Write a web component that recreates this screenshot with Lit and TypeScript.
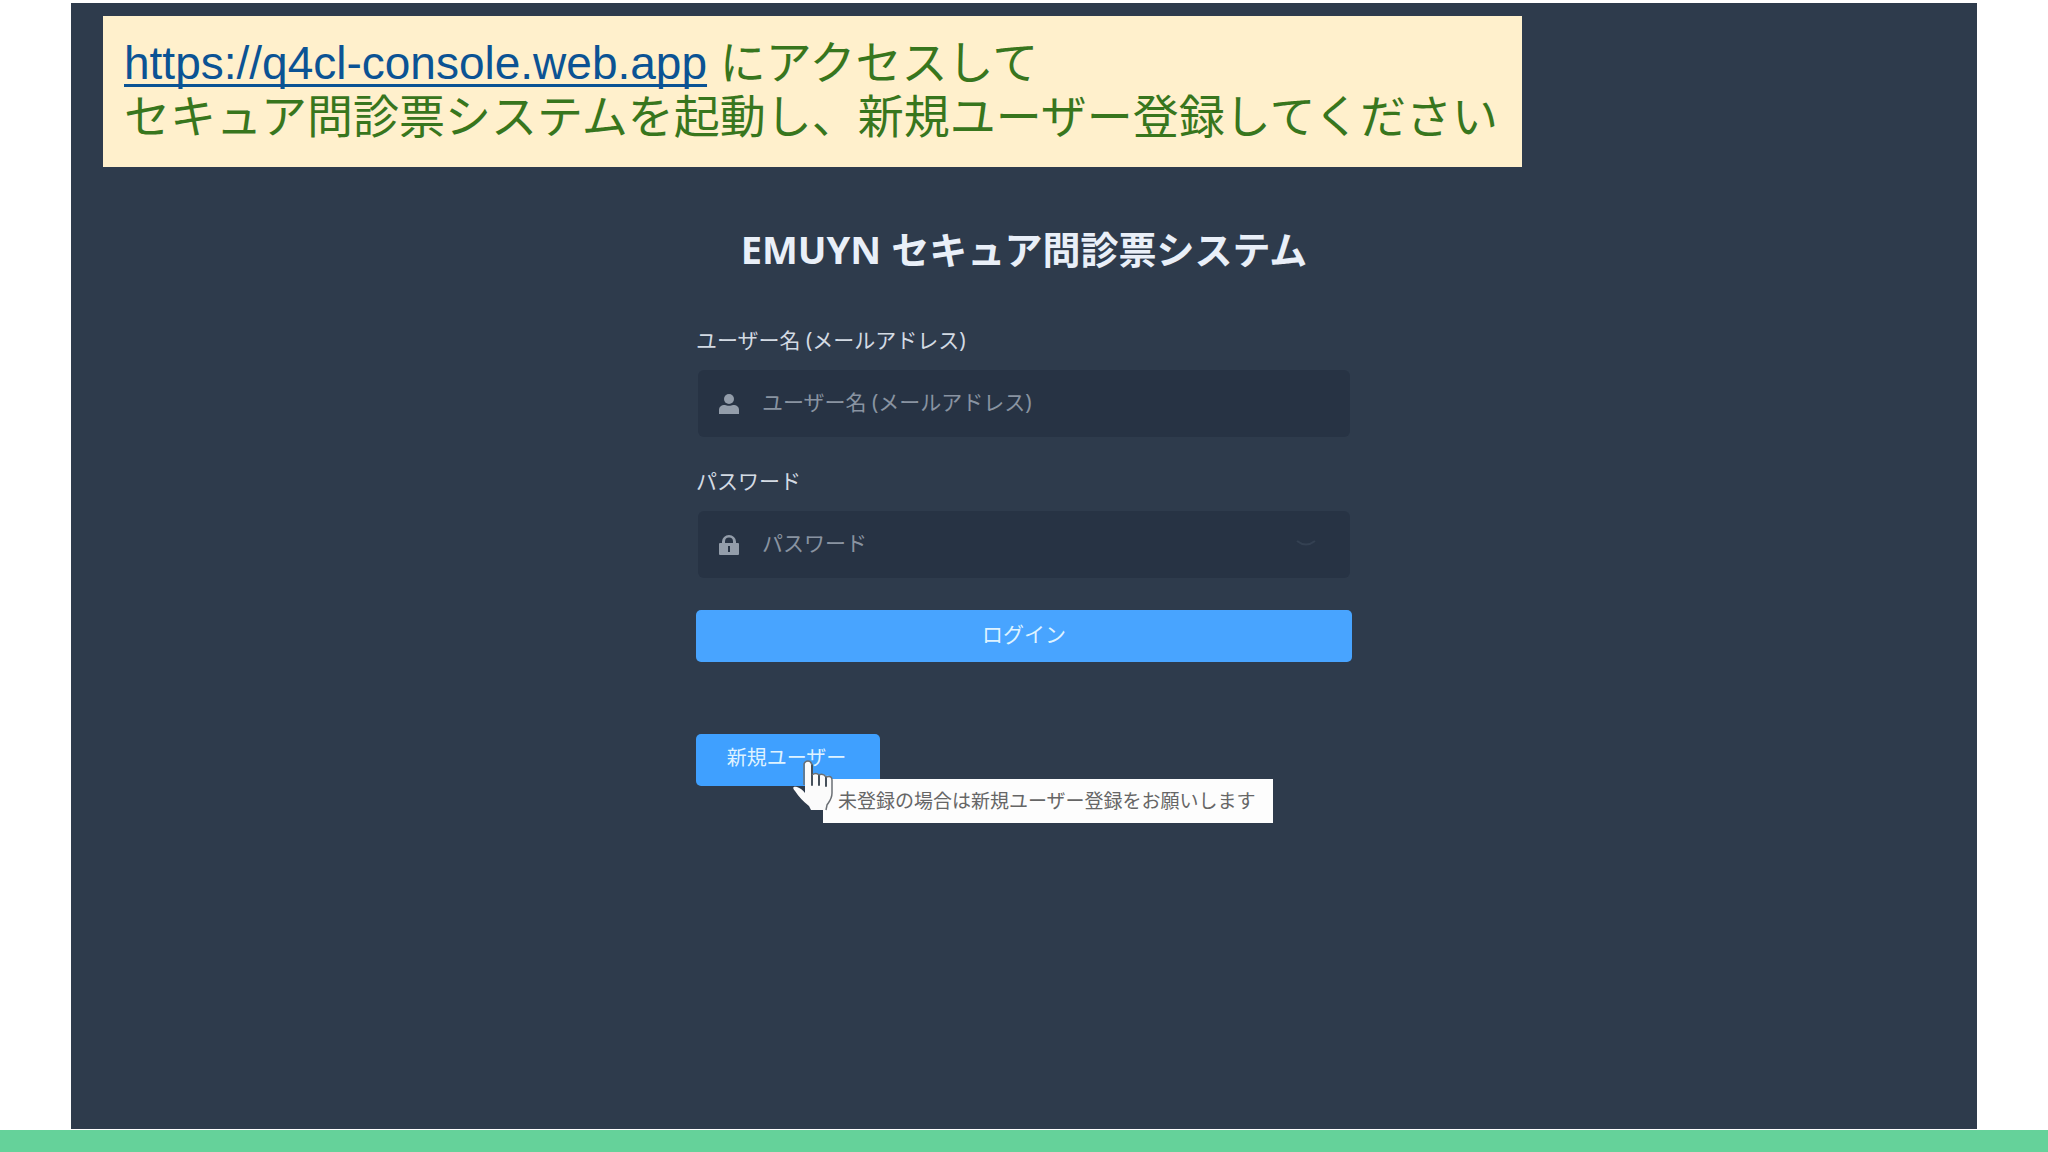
import { LitElement, html, css } from "lit";
import { customElement } from "lit/decorators.js";

const sans = css`"Noto Sans", "Noto Sans CJK JP", sans-serif`;

@customElement("login-form")
class LoginForm extends LitElement {
  static styles = css`
    :host { display: block; width: 656px; font-family: ${sans}; font-size: 21px; line-height: 32px; color: #d3dae3; }
    form { display: flex; flex-direction: column; margin: 0; }
    h1 { margin: 0 -40px 47px; font-size: 38px; line-height: 56px; font-weight: 700; text-align: center; white-space: nowrap; color: #e9eff8; }
    label { margin-bottom: 14px; }
    .field { display: flex; align-items: center; gap: 22px; height: 67px; margin: 0 2px 28px; padding: 0 22px 4px 20px; box-sizing: border-box; background: #273344; border-radius: 6px; }
    .icon { flex: none; width: 22px; height: 22px; margin-top: 4px; fill: #939daa; }
    .chevron { flex: none; width: 20px; height: 10px; margin-right: 12px; fill: none; stroke: #344152; stroke-width: 2; }
    input { flex: 1; min-width: 0; padding: 0; border: 0; outline: 0; background: none; color: #d3dae3; font: inherit; line-height: 32px; }
    input::placeholder { color: #8993a1; opacity: 1; }
    button { height: 52px; padding: 0 0 4px; border: 0; border-radius: 5px; background: #48a4ff; color: #dff3ff; font: inherit; cursor: pointer; }
    .login { margin-top: 4px; }
    .register { position: relative; align-self: flex-start; margin-top: 72px; }
    .new-user { width: 184px; padding-right: 3px; background: #3fa0ff; font-size: 20px; }
    .tip { position: absolute; left: 127px; top: 45px; padding: 0 17px 0 15px; height: 44px; line-height: 44px; font-size: 19px; color: #666; background: #fdfdfd; white-space: nowrap; }
    .hand { position: absolute; left: 96px; top: 26px; width: 44px; height: 52px; }
  `;

  render() {
    return html`
      <form @submit=${(e: Event) => e.preventDefault()}>
        <h1>EMUYN セキュア問診票システム</h1>
        <label for="user">ユーザー名 (メールアドレス)</label>
        <div class="field">
          <svg class="icon" viewBox="0 0 22 22" aria-hidden="true"><circle cx="11" cy="6" r="5" /><path d="M1 21v-4c0-3 2-5 6-5 2 1 6 1 8 0 4 0 6 2 6 5v4z" /></svg>
          <input id="user" type="text" placeholder="ユーザー名 (メールアドレス)" />
        </div>
        <label for="password">パスワード</label>
        <div class="field">
          <svg class="icon" viewBox="0 0 22 22" aria-hidden="true"><path fill-rule="evenodd" d="M1 10q0-1 1-1h2V7.500a7 6.500 0 0 1 14 0V9h2q1 0 1 1v10q0 1-1 1H2q-1 0-1-1zM7 9h8V7.500a4 4 0 0 0-8 0zM10 12v6h2v-6z" /></svg>
          <input id="password" type="password" placeholder="パスワード" />
          <svg class="chevron" viewBox="0 0 20 10" aria-hidden="true"><path d="M1 3q9 7 18 0" /></svg>
        </div>
        <button class="login" type="submit">ログイン</button>
        <div class="register">
          <button class="new-user" type="button" aria-describedby="tip">新規ユーザー</button>
          <div class="tip" id="tip" role="tooltip">未登録の場合は新規ユーザー登録をお願いします</div>
          <svg class="hand" viewBox="0 0 44 52" aria-hidden="true">
            <path fill="#fbfbfb" d="M13 33V4q0-3 3-3t4 3v11q3-3 7 0 4-2 7 1 6-1 6 4v13c0 6-3 9-5 12l-1 5H19l-2-4C11 41 7 37 3 31c-3-3-2-5 2-4 3 1 6 3 8 6z" />
            <path fill="none" stroke="#46505b" stroke-width="2" stroke-linecap="round" d="M20 5v20M27 15v10M34 17v9" />
            <path fill="none" stroke="#6b7075" stroke-width="1.5" d="M12 25V4q1-3 4-3 3 0 4 4M20 15q4-3 7 0M27 15q4-2 7 2M34 17q6-2 6 3v13c0 6-3 9-5 12l-1 5" />
          </svg>
        </div>
      </form>
    `;
  }
}

@customElement("app-root")
class AppRoot extends LitElement {
  static styles = css`
    :host { display: flex; flex-direction: column; min-height: 100vh; background: #fff; }
    .slide { position: relative; flex: 1; display: flex; justify-content: center; box-sizing: border-box; margin: 3px 71px 1px; padding-top: 218px; background: #2e3b4c; }
    .note { position: absolute; left: 32px; top: 13px; width: 1419px; height: 151px; box-sizing: border-box; margin: 0; padding: 20px 21px; background: #fff0cc; color: #38761d; font: 46px/54px "Liberation Sans", "Noto Sans CJK JP", sans-serif; white-space: nowrap; }
    a { color: #0b5394; text-decoration-thickness: 3px; text-underline-offset: 5px; text-decoration-skip-ink: none; }
    .bar { height: 22px; background: #65d29a; }
  `;

  render() {
    return html`
      <main class="slide">
        <p class="note"><a href="https://q4cl-console.web.app">https://q4cl-console.web.app</a> にアクセスして<br />セキュア問診票システムを起動し、新規ユーザー登録してください</p>
        <login-form></login-form>
      </main>
      <div class="bar"></div>
    `;
  }
}
